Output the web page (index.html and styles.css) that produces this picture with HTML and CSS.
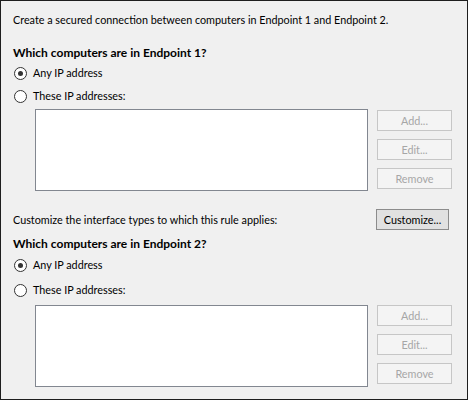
FILE: index.html
```html
<!DOCTYPE html>
<html>
<head>
<meta charset="utf-8">
<link rel="stylesheet" href="styles.css">
</head>
<body>
<div class="panel">
  <p class="intro">Create a secured connection between computers in Endpoint 1 and Endpoint 2.</p>

  <section class="endpoint first">
    <h2 class="heading">Which computers are in Endpoint 1?</h2>
    <label class="radio r1"><span class="dot checked"></span>Any IP address</label>
    <label class="radio r2"><span class="dot"></span>These IP addresses:</label>
    <div class="list-row">
      <div class="listbox"></div>
      <div class="buttons">
        <button class="btn disabled">Add...</button>
        <button class="btn disabled">Edit...</button>
        <button class="btn disabled">Remove</button>
      </div>
    </div>
  </section>

  <div class="custom-row">
    <span>Customize the interface types to which this rule applies:</span>
    <button class="btn custom">Customize...</button>
  </div>

  <section class="endpoint second">
    <h2 class="heading">Which computers are in Endpoint 2?</h2>
    <label class="radio r1"><span class="dot checked"></span>Any IP address</label>
    <label class="radio r2"><span class="dot"></span>These IP addresses:</label>
    <div class="list-row">
      <div class="listbox"></div>
      <div class="buttons">
        <button class="btn disabled">Add...</button>
        <button class="btn disabled">Edit...</button>
        <button class="btn disabled">Remove</button>
      </div>
    </div>
  </section>
</div>
</body>
</html>
```
FILE: styles.css
```css
* { box-sizing: border-box; }
html, body { margin: 0; padding: 0; }
body {
  width: 468px;
  height: 400px;
  background: #f0f0f0;
  border: 1px solid #1e1e1e;
  font-family: "Segoe UI", Lato, "Noto Sans", sans-serif;
  font-size: 10.8px;
  color: #000;
  overflow: hidden;
}
.panel {
  padding: 10px 0 0 12px;
}
.intro {
  margin: 0;
  line-height: 18px;
}
.heading {
  margin: 15px 0 0 0;
  font-size: 12px;
  font-weight: bold;
  line-height: 18px;
}
.radio {
  display: flex;
  align-items: center;
  height: 18px;
  line-height: 18px;
}
.first .r1 { margin-top: 2px; }
.first .r2 { margin-top: 5px; }
.dot {
  width: 13px;
  height: 13px;
  border: 1px solid #333;
  border-radius: 50%;
  background: #fff;
  margin: 0 6px 0 1px;
  display: flex;
  align-items: center;
  justify-content: center;
}
.dot.checked::after {
  content: "";
  width: 5px;
  height: 5px;
  border-radius: 50%;
  background: #333;
}
.list-row {
  display: flex;
  gap: 9px;
  margin: 4px 0 0 22px;
}
.listbox {
  width: 333px;
  height: 82px;
  background: #fff;
  border: 1px solid #828790;
}
.buttons {
  display: flex;
  flex-direction: column;
  gap: 8px;
  padding-top: 1px;
}
.btn {
  width: 75px;
  height: 21px;
  padding: 0;
  font-family: inherit;
  font-size: 10.8px;
  border: 1px solid #adadad;
  background: #e1e1e1;
  color: #000;
}
.btn.disabled {
  border-color: #c6c6c6;
  background: #f4f4f4;
  color: #a6a6a6;
}
.custom-row {
  display: flex;
  align-items: center;
  justify-content: space-between;
  margin-top: 18px;
  padding-right: 18px;
  height: 21px;
}
.btn.custom {
  width: 73px;
  border-color: #8c8c8c;
}
.second .heading { margin-top: 5px; }
.second .r1 { margin-top: 3px; }
.second .r2 { margin-top: 7px; }
.second .list-row { margin-top: 6px; }
.second .buttons { padding-top: 0; }
```
